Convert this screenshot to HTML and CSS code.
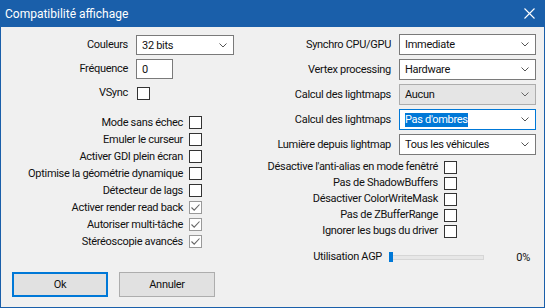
FILE: index.html
```html
<!DOCTYPE html>
<html lang="fr">
<head>
  <meta charset="UTF-8">
  <title>Compatibilité affichage</title>
  <link rel="stylesheet" href="styles.css">
</head>
<body>
  <div class="window">
    <div class="titlebar">
      <span class="title">Compatibilité affichage</span>
      <svg class="close" width="11" height="11" viewBox="0 0 11 11"><path d="M0.5 0.5 L10.5 10.5 M10.5 0.5 L0.5 10.5" stroke="#fff" stroke-width="1.1" fill="none"/></svg>
    </div>
    <div class="body">
      <div class="col-left">
        <div class="left-top">
          <label>Couleurs</label>
          <div class="combo w-couleurs"><span>32 bits</span><svg class="chev" width="8" height="5" viewBox="0 0 8 5"><path d="M0.5 0.5 L4 4 L7.5 0.5" stroke="#555" fill="none"/></svg></div>
          <label>Fréquence</label>
          <div class="edit"><span>0</span></div>
          <label>VSync</label>
          <span class="box vsync"></span>
        </div>
        <div class="left-checks">
          <label>Mode sans échec</label><span class="box"></span>
          <label>Emuler le curseur</label><span class="box"></span>
          <label>Activer GDI plein écran</label><span class="box"></span>
          <label>Optimise la géométrie dynamique</label><span class="box"></span>
          <label>Détecteur de lags</label><span class="box"></span>
          <label>Activer render read back</label><span class="box checked"><svg width="11" height="11" viewBox="0 0 11 11"><path d="M1.5 5.5 L4.2 8.2 L9.5 2.5" stroke="#666" stroke-width="1.1" fill="none"/></svg></span>
          <label>Autoriser multi-tâche</label><span class="box checked"><svg width="11" height="11" viewBox="0 0 11 11"><path d="M1.5 5.5 L4.2 8.2 L9.5 2.5" stroke="#666" stroke-width="1.1" fill="none"/></svg></span>
          <label>Stéréoscopie avancés</label><span class="box checked"><svg width="11" height="11" viewBox="0 0 11 11"><path d="M1.5 5.5 L4.2 8.2 L9.5 2.5" stroke="#666" stroke-width="1.1" fill="none"/></svg></span>
        </div>
        <div class="buttons">
          <button class="btn default">Ok</button>
          <button class="btn">Annuler</button>
        </div>
      </div>
      <div class="col-right">
        <div class="right-top">
          <label>Synchro CPU/GPU</label>
          <div class="combo"><span>Immediate</span><svg class="chev" width="8" height="5" viewBox="0 0 8 5"><path d="M0.5 0.5 L4 4 L7.5 0.5" stroke="#555" fill="none"/></svg></div>
          <label>Vertex processing</label>
          <div class="combo"><span>Hardware</span><svg class="chev" width="8" height="5" viewBox="0 0 8 5"><path d="M0.5 0.5 L4 4 L7.5 0.5" stroke="#555" fill="none"/></svg></div>
          <label>Calcul des lightmaps</label>
          <div class="combo disabled"><span>Aucun</span><svg class="chev" width="8" height="5" viewBox="0 0 8 5"><path d="M0.5 0.5 L4 4 L7.5 0.5" stroke="#666" fill="none"/></svg></div>
          <label>Calcul des lightmaps</label>
          <div class="combo focused"><span class="sel">Pas d'ombres</span><svg class="chev" width="8" height="5" viewBox="0 0 8 5"><path d="M0.5 0.5 L4 4 L7.5 0.5" stroke="#555" fill="none"/></svg></div>
          <label>Lumière depuis lightmap</label>
          <div class="combo"><span>Tous les véhicules</span><svg class="chev" width="8" height="5" viewBox="0 0 8 5"><path d="M0.5 0.5 L4 4 L7.5 0.5" stroke="#555" fill="none"/></svg></div>
        </div>
        <div class="right-checks">
          <label>Désactive l'anti-alias en mode fenêtré</label><span class="box"></span>
          <label>Pas de ShadowBuffers</label><span class="box"></span>
          <label>Désactiver ColorWriteMask</label><span class="box"></span>
          <label>Pas de ZBufferRange</label><span class="box"></span>
          <label>Ignorer les bugs du driver</label><span class="box"></span>
        </div>
        <div class="agp">
          <label>Utilisation AGP</label>
          <div class="track"><span class="thumb"></span></div>
          <span class="pct">0%</span>
        </div>
      </div>
    </div>
  </div>
</body>
</html>
```

FILE: styles.css
```css
* {
  box-sizing: border-box;
}
body {
  margin: 0;
  font-family: Roboto, "Noto Sans", sans-serif;
  font-size: 11px;
  letter-spacing: -0.3px;
  color: #111;
  background: #f0f0f0;
}
.window {
  width: 545px;
  height: 308px;
  border: 1px solid #1a5faa;
  border-top: none;
  background: #f0f0f0;
  display: flex;
  flex-direction: column;
}
.titlebar {
  height: 27px;
  margin: 0 -1px;
  background: #1a5faa;
  color: #fff;
  display: flex;
  align-items: center;
  justify-content: space-between;
  padding: 0 10px 0 5px;
}
.title {
  font-size: 12px;
  letter-spacing: 0;
}
.close {
  display: block;
}
.body {
  flex: 1;
  display: flex;
}
.col-left {
  width: 270px;
}
.col-right {
  flex: 1;
}
label {
  white-space: nowrap;
  text-align: right;
  justify-self: end;
  align-self: center;
  line-height: 16px;
}

/* left column */
.left-top {
  display: grid;
  grid-template-columns: 127px 98px;
  grid-auto-rows: 20px;
  column-gap: 8px;
  row-gap: 4px;
  padding-top: 8px;
}
.left-checks {
  display: grid;
  grid-template-columns: 182px 13px;
  grid-auto-rows: 17px;
  column-gap: 6px;
  margin-top: 11px;
}
.buttons {
  display: flex;
  gap: 11px;
  margin: 22px 0 0 11px;
}
.btn {
  width: 96px;
  height: 25px;
  font-family: inherit;
  font-size: 11px;
  letter-spacing: -0.3px;
  color: #111;
  background: #e1e1e1;
  border: 1px solid #adadad;
  padding: 0;
}
.btn.default {
  border: 2px solid #0078d7;
}

/* right column */
.right-top {
  display: grid;
  grid-template-columns: 120px 137px;
  grid-auto-rows: 21px;
  column-gap: 8px;
  row-gap: 4px;
  padding-top: 7px;
}
.right-checks {
  display: grid;
  grid-template-columns: 167px 13px;
  grid-auto-rows: 16px;
  column-gap: 6px;
  margin-top: 4px;
}
.agp {
  display: grid;
  grid-template-columns: 111px 95px 1fr;
  column-gap: 7px;
  height: 16px;
  margin-top: 10px;
  align-items: center;
}
.track {
  position: relative;
  height: 5px;
  background: #e7e7e7;
  border: 1px solid #d6d6d6;
}
.thumb {
  position: absolute;
  left: -1px;
  top: -4px;
  width: 4px;
  height: 10px;
  background: #0078d7;
}
.pct {
  text-align: right;
  padding-right: 14px;
}

/* controls */
.combo {
  display: flex;
  align-items: center;
  justify-content: space-between;
  background: #fff;
  border: 1px solid #7a7a7a;
  padding: 0 6px 0 5px;
}
.combo.disabled {
  background: #e5e5e5;
  border-color: #adadad;
}
.combo.focused {
  border-color: #0078d7;
}
.combo .sel {
  background: #0078d7;
  color: #fff;
  line-height: 14px;
}
.chev {
  display: block;
}
.edit {
  width: 37px;
  background: #fff;
  border: 1px solid #7a7a7a;
  padding: 0 5px;
  display: flex;
  align-items: center;
}
.box {
  width: 13px;
  height: 13px;
  align-self: center;
  background: #fff;
  border: 1px solid #333;
  display: flex;
  align-items: center;
  justify-content: center;
}
.box.vsync {
  margin-left: 1px;
}
.box.checked {
  border-color: #999;
}
.box svg {
  display: block;
}
```
